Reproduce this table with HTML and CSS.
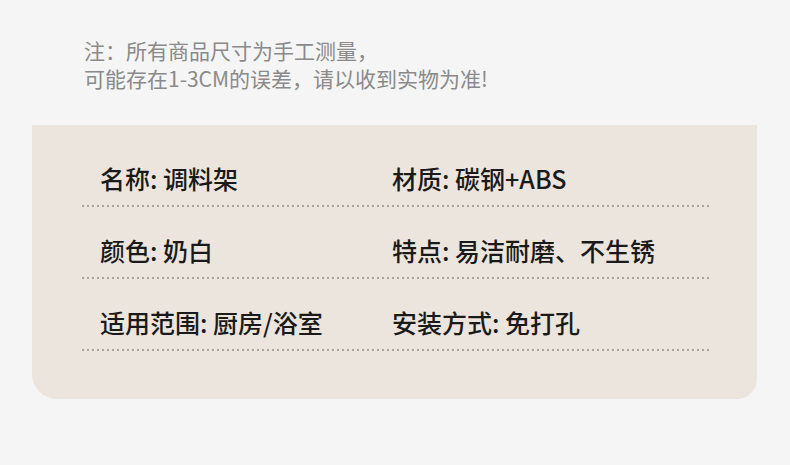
FILE: index.html
```html
<!DOCTYPE html>
<html lang="zh-CN">
<head>
<meta charset="utf-8">
<link rel="stylesheet" href="styles.css">
</head>
<body>
<div class="note">
  <p>注：所有商品尺寸为手工测量，</p>
  <p>可能存在1-3CM的误差，请以收到实物为准!</p>
</div>
<div class="card">
  <div class="row">
    <div class="cells">
      <div class="cell">名称: 调料架</div>
      <div class="cell">材质: 碳钢+ABS</div>
    </div>
    <div class="rule"></div>
  </div>
  <div class="row">
    <div class="cells">
      <div class="cell">颜色: 奶白</div>
      <div class="cell">特点: 易洁耐磨、不生锈</div>
    </div>
    <div class="rule"></div>
  </div>
  <div class="row">
    <div class="cells">
      <div class="cell">适用范围: 厨房/浴室</div>
      <div class="cell">安装方式: 免打孔</div>
    </div>
    <div class="rule"></div>
  </div>
</div>
</body>
</html>
```
FILE: styles.css
```css
html, body {
  margin: 0;
  padding: 0;
  background: #f5f5f5;
}
body {
  width: 790px;
  height: 465px;
  overflow: hidden;
  font-family: "Noto Sans CJK SC", "Noto Sans", sans-serif;
}
.note {
  padding: 36px 0 0 84px;
  height: 125px;
  box-sizing: border-box;
  color: #8a8a8a;
  font-size: 21px;
  line-height: 28px;
}
.note p {
  margin: 0;
}
.card {
  margin-left: 32px;
  width: 725px;
  height: 274px;
  box-sizing: border-box;
  background: #ece5dd;
  border-radius: 0 0 20px 25px;
  padding: 38px 0 0 50px;
  display: flex;
  flex-direction: column;
  gap: 28px;
}
.row {
  width: 629px;
  display: flex;
  flex-direction: column;
  gap: 12px;
}
.cells {
  display: flex;
  padding-left: 18px;
}
.cell {
  font-size: 25px;
  line-height: 30px;
  font-weight: 500;
  color: #1a1a1a;
}
.cell:first-child {
  width: 292px;
}
.rule {
  height: 2px;
  background-image: linear-gradient(to right, #a8a39d 2px, transparent 2px);
  background-size: 5px 2px;
  background-repeat: repeat-x;
}
```
